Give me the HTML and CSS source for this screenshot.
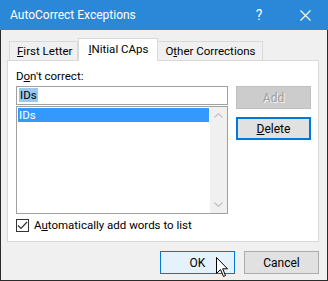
FILE: index.html
```html
<!DOCTYPE html>
<html lang="en">
<head>
    <meta charset="UTF-8">
    <title>AutoCorrect Exceptions</title>
    <link rel="stylesheet" href="styles.css">
</head>
<body>
    <div class="window">
        <div class="titlebar">
            <span class="title">AutoCorrect Exceptions</span>
            <div class="controls">
                <span class="ctl help">?</span>
                <span class="ctl">
                    <svg width="11" height="11" viewBox="0 0 11 11">
                        <path d="M0.5 0.5 L10.5 10.5 M10.5 0.5 L0.5 10.5" stroke="#fff" stroke-width="1.1" fill="none"/>
                    </svg>
                </span>
            </div>
        </div>

        <div class="content">
            <div class="tabs">
                <div class="tab first"><u>F</u>irst Letter</div>
                <div class="tab active"><u>I</u>Nitial CAps</div>
                <div class="tab">O<u>t</u>her Corrections</div>
            </div>

            <div class="panel">
                <div class="label">D<u>o</u>n't correct:</div>
                <div class="row">
                    <div class="left">
                        <div class="textbox"><span class="sel">IDs</span></div>
                        <div class="listbox">
                            <div class="items">
                                <div class="item selected">IDs</div>
                            </div>
                            <div class="scrollbar">
                                <svg width="9" height="5" viewBox="0 0 9 5"><path d="M0.5 4.5 L4.5 0.5 L8.5 4.5" stroke="#c2c2c2" stroke-width="1.2" fill="none"/></svg>
                                <svg width="9" height="5" viewBox="0 0 9 5"><path d="M0.5 0.5 L4.5 4.5 L8.5 0.5" stroke="#c2c2c2" stroke-width="1.2" fill="none"/></svg>
                            </div>
                        </div>
                    </div>
                    <div class="right">
                        <button class="btn disabled">Add</button>
                        <button class="btn focused"><u>D</u>elete</button>
                    </div>
                </div>
                <label class="check">
                    <span class="box">
                        <svg width="11" height="11" viewBox="0 0 11 11"><path d="M1 5.5 L4 8.5 L10 2" stroke="#333" stroke-width="1.2" fill="none"/></svg>
                    </span>
                    <span>A<u>u</u>tomatically add words to list</span>
                </label>
            </div>

            <div class="footer">
                <button class="btn default">OK</button>
                <button class="btn">Cancel</button>
            </div>
        </div>

        <svg class="cursor" width="13" height="20" viewBox="0 0 13 20">
            <path d="M0.5 0.5 L0.5 16.5 L4.5 12.5 L7.5 19.5 L9.5 18.5 L6.7 11.8 L11.5 11.8 Z" fill="#fff" stroke="#000" stroke-width="1"/>
        </svg>
    </div>
</body>
</html>
```

FILE: styles.css
```css
body {
    margin: 0;
    font-family: Roboto, "Noto Sans", sans-serif;
    font-size: 11.5px;
    color: #000;
}

.window {
    position: relative;
    width: 328px;
    height: 281px;
    box-sizing: border-box;
    border: 1px solid #2b2b2b;
    border-top: none;
    background: #f0f0f0;
    display: flex;
    flex-direction: column;
}

.titlebar {
    height: 30px;
    margin: 0 -1px;
    background: #2b88d8;
    color: #fff;
    display: flex;
    align-items: center;
}

.title {
    padding-left: 10px;
    font-size: 12px;
}

.controls {
    margin-left: auto;
    display: flex;
    height: 100%;
}

.ctl {
    width: 46px;
    display: flex;
    align-items: center;
    justify-content: center;
}

.help {
    font-size: 14px;
}

.content {
    flex: 1;
    display: flex;
    flex-direction: column;
    padding: 8px 8px 0 6px;
}

.tabs {
    display: flex;
    align-items: flex-end;
    height: 22px;
    padding-left: 2px;
}

.tab {
    height: 20px;
    box-sizing: border-box;
    padding: 0 6px 0 7px;
    border: 1px solid #d9d9d9;
    border-bottom: none;
    background: #f0f0f0;
    line-height: 19px;
    margin-bottom: -1px;
}

.tab.first {
    padding-right: 5px;
}

.tab + .tab {
    border-left: none;
}

.tab.active {
    position: relative;
    z-index: 1;
    height: 23px;
    background: #fff;
    border-left: 1px solid #d9d9d9;
    padding: 0 9px 0 9px;
    line-height: 20px;
}

.tab.active + .tab {
    border-left: none;
}

.panel {
    background: #fff;
    border: 1px solid #d9d9d9;
    height: 182px;
    box-sizing: border-box;
    padding: 7px 7px 0 8px;
    display: flex;
    flex-direction: column;
}

.label {
    line-height: 17px;
    margin-bottom: 1px;
}

.row {
    display: flex;
    gap: 8px;
}

.left {
    width: 213px;
    display: flex;
    flex-direction: column;
    gap: 1px;
}

.textbox {
    height: 19px;
    box-sizing: border-box;
    border: 1px solid #a0a0a0;
    padding: 1px 0 0 2px;
    line-height: 15px;
}

.sel {
    background: #99c9ef;
    padding: 0 1px;
}

.listbox {
    height: 108px;
    box-sizing: border-box;
    border: 1px solid #a0a0a0;
    display: flex;
}

.items {
    flex: 1;
    padding: 1px;
}

.item {
    height: 14px;
    line-height: 14px;
    padding-left: 1px;
}

.item.selected {
    background: #3399ff;
    color: #fff;
}

.scrollbar {
    width: 17px;
    background: #f0f0f0;
    display: flex;
    flex-direction: column;
    justify-content: space-between;
    align-items: center;
    padding: 6px 0;
    box-sizing: border-box;
}

.right {
    display: flex;
    flex-direction: column;
    gap: 8px;
}

.btn {
    width: 75px;
    height: 23px;
    box-sizing: border-box;
    border: 1px solid #adadad;
    background: #e1e1e1;
    font-family: inherit;
    font-size: 12px;
    color: #000;
    padding: 0;
}

.btn.disabled {
    background: #cccccc;
    border-color: #bfbfbf;
    color: #a0a0a0;
    text-shadow: 1px 1px 0 #f4f4f4;
}

.btn.focused {
    border: 2px solid #0078d7;
}

.btn.default {
    background: #e5f1fb;
    border-color: #0078d7;
}

.check {
    display: flex;
    align-items: center;
    gap: 5px;
    margin-top: 4px;
    line-height: 15px;
}

.box {
    width: 13px;
    height: 13px;
    box-sizing: border-box;
    border: 1px solid #333;
    background: #fff;
    display: flex;
    align-items: center;
    justify-content: center;
}

.footer {
    display: flex;
    justify-content: flex-end;
    gap: 9px;
    margin-top: 9px;
    padding-right: 0;
}

.cursor {
    position: absolute;
    left: 215px;
    top: 257px;
}
```
